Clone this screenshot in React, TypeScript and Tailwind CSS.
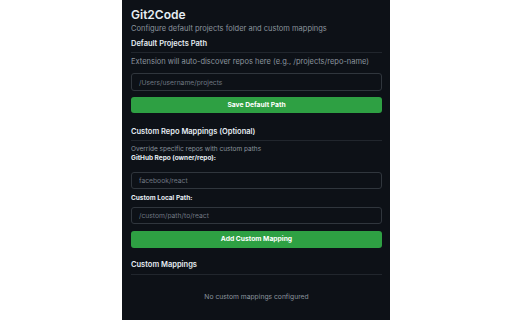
const font = { fontFamily: "Inter, 'Noto Sans', sans-serif" };

function Field({ placeholder, h = "h-[17px]" }: { placeholder: string; h?: string }) {
  return (
    <input
      placeholder={placeholder}
      className={`block ${h} w-full rounded-[3px] border border-[#30363d] bg-[#0d1117] px-[7px] text-[6.75px] text-[#e6edf3] outline-none placeholder:text-[#6e7681]`}
    />
  );
}

function Heading({ children, className = "" }: { children: string; className?: string }) {
  return (
    <h2
      className={`border-b border-[#21262d] pb-[3px] text-[7.5px] font-semibold leading-[11px] text-[#e6edf3] ${className}`}
    >
      {children}
    </h2>
  );
}

export default function App() {
  return (
    <div className="min-h-[320px] w-full bg-white" style={font}>
      <div className="mx-auto min-h-[320px] w-[268px] bg-[#0d1117] pb-4 pl-[9px] pr-[8px] pt-[9px]">
        <h1 className="text-[12px] font-semibold leading-[12px] text-[#e6edf3]">Git2Code</h1>
        <p className="mt-[3px] text-[7.5px] leading-[10px] text-[#8b949e]">
          Configure default projects folder and custom mappings
        </p>

        <Heading className="mt-[4px]">Default Projects Path</Heading>
        <p className="mt-[4px] text-[7.5px] leading-[10px] text-[#8b949e]">
          Extension will auto-discover repos here (e.g., /projects/repo-name)
        </p>
        <div className="mt-[6px]">
          <Field placeholder="/Users/username/projects" h="h-[18px]" />
        </div>
        <button className="mt-[6px] block h-[16px] w-full rounded-[3px] bg-[#2ea043] text-[6.75px] font-bold text-white">
          Save Default Path
        </button>

        <Heading className="mt-[13px]">Custom Repo Mappings (Optional)</Heading>
        <p className="mt-[4px] text-[6.5px] leading-[9px] text-[#8b949e]">
          Override specific repos with custom paths
        </p>
        <label className="block text-[6.5px] font-bold leading-[8px] text-[#e6edf3]">
          GitHub Repo (owner/repo):
        </label>
        <div className="mt-[10px]">
          <Field placeholder="facebook/react" />
        </div>
        <label className="mt-[5px] block text-[6.5px] font-bold leading-[8px] text-[#e6edf3]">
          Custom Local Path:
        </label>
        <div className="mt-[5px]">
          <Field placeholder="/custom/path/to/react" />
        </div>
        <button className="mt-[7px] block h-[17px] w-full rounded-[3px] bg-[#2ea043] text-[6.75px] font-bold text-white">
          Add Custom Mapping
        </button>

        <Heading className="mt-[11px] pb-[4px]">Custom Mappings</Heading>
        <p className="mt-[17px] text-center text-[6.75px] leading-[10px] text-[#8b949e]">
          No custom mappings configured
        </p>
      </div>
    </div>
  );
}
